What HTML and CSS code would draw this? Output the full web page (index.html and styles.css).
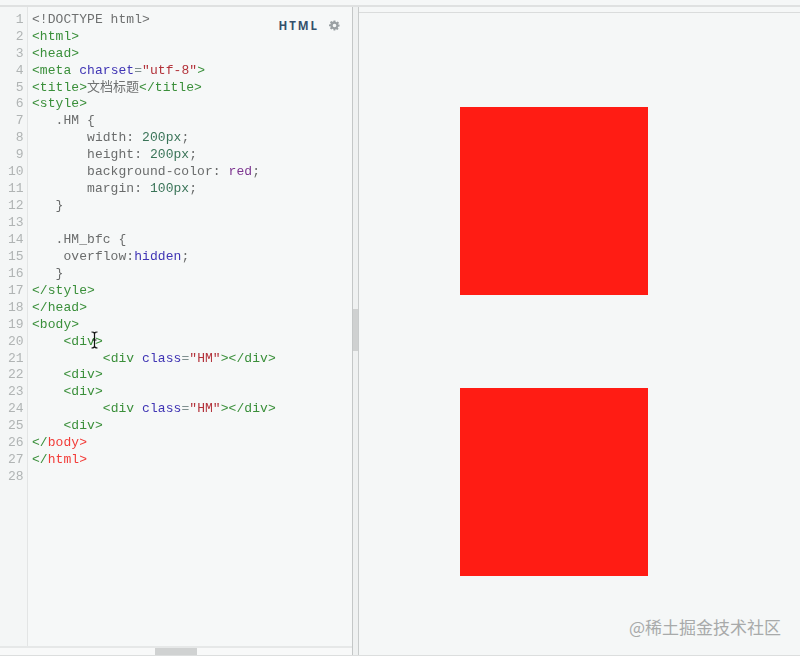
FILE: index.html
```html
<!DOCTYPE html>
<html lang="zh">
<head>
<meta charset="utf-8">
<title>HTML 预览</title>
<link rel="stylesheet" href="styles.css">
</head>
<body>
<div class="app">
  <section class="editor">
    <div class="editor-main">
      <div class="gutter">
        <div>1</div><div>2</div><div>3</div><div>4</div><div>5</div><div>6</div><div>7</div><div>8</div><div>9</div><div>10</div><div>11</div><div>12</div><div>13</div><div>14</div><div>15</div><div>16</div><div>17</div><div>18</div><div>19</div><div>20</div><div>21</div><div>22</div><div>23</div><div>24</div><div>25</div><div>26</div><div>27</div><div>28</div>
      </div>
      <pre class="code"><span class="meta">&lt;!DOCTYPE html&gt;</span>
<span class="tag">&lt;html&gt;</span>
<span class="tag">&lt;head&gt;</span>
<span class="tag">&lt;meta</span> <span class="attr">charset</span><span class="eq">=</span><span class="str">"utf-8"</span><span class="tag">&gt;</span>
<span class="tag">&lt;title&gt;</span><span class="cjk">文档标题</span><span class="tag">&lt;/title&gt;</span>
<span class="tag">&lt;style&gt;</span>
   .HM {
       width: <span class="num">200px</span>;
       height: <span class="num">200px</span>;
       background-color: <span class="kw">red</span>;
       margin: <span class="num">100px</span>;
   }

   .HM_bfc {
    overflow:<span class="attr">hidden</span>;
   }
<span class="tag">&lt;/style&gt;</span>
<span class="tag">&lt;/head&gt;</span>
<span class="tag">&lt;body&gt;</span>
    <span class="tag">&lt;div&gt;</span>
         <span class="tag">&lt;div</span> <span class="attr">class</span><span class="eq">=</span><span class="str">"HM"</span><span class="tag">&gt;&lt;/div&gt;</span>
    <span class="tag">&lt;div&gt;</span>
    <span class="tag">&lt;div&gt;</span>
         <span class="tag">&lt;div</span> <span class="attr">class</span><span class="eq">=</span><span class="str">"HM"</span><span class="tag">&gt;&lt;/div&gt;</span>
    <span class="tag">&lt;div&gt;</span>
<span class="tag">&lt;/</span><span class="err">body</span><span class="err">&gt;</span>
<span class="tag">&lt;/</span><span class="err">html</span><span class="err">&gt;</span>
</pre>
    </div>
    <div class="hscroll"><div class="hthumb"></div></div>
    <div class="lang">
      <span class="lang-name">HTML</span>
      <svg class="gear" viewBox="0 0 24 24" width="11" height="11" aria-hidden="true"><path fill="#9aa0a3" fill-rule="evenodd" d="M10 1h4l.6 3.100 1.900.8 2.600-1.800 2.800 2.800-1.800 2.600.8 1.900L23 10v4l-3.100.6-.8 1.900 1.800 2.600-2.800 2.800-2.600-1.800-1.900.8L13.900 23h-4l-.5-3.100-1.900-.8-2.600 1.800-2.800-2.800 1.800-2.600-.8-1.900L0 13.900v-4l3.100-.5.8-1.900L2.100 4.900l2.800-2.800 2.600 1.800 1.900-.8zM12 8a4 4 0 1 0 0 8 4 4 0 0 0 0-8z"/></svg>
    </div>
    <svg class="ibeam" viewBox="0 0 9 18" width="9" height="18" aria-hidden="true"><path fill="none" stroke="#111" stroke-width="1.2" d="M1.500 1c1.500 0 3 .4 3 2v12c0 1.600-1.500 2-3 2M7.500 1c-1.500 0-3 .4-3 2v12c0 1.600 1.500 2 3 2M2.500 9h4"/></svg>
  </section>
  <div class="splitter"><div class="grip"></div></div>
  <section class="preview">
    <div class="box"></div>
    <div class="box"></div>
    <div class="mark">@稀土掘金技术社区</div>
  </section>
</div>
</body>
</html>
```
FILE: styles.css
```css
html, body {
  margin: 0;
  height: 100%;
  background: #f5f7f7;
  overflow: hidden;
}
.app {
  display: flex;
  height: 648px;
  margin-top: 5px;
  border-top: 2px solid #dfe1e1;
  border-bottom: 1px solid #dcdede;
}
.editor {
  position: relative;
  width: 352px;
  display: flex;
  flex-direction: column;
  border-right: 1px solid #c4c7c7;
  background: #f6f8f8;
}
.editor-main {
  flex: 1;
  display: flex;
  min-height: 0;
}
.gutter {
  width: 27px;
  border-right: 1px solid #e3e5e5;
  padding-top: 4.800px;
  font: 13px/16.93px "Liberation Mono", monospace;
  color: #b0b4b4;
  text-align: right;
  background: #f4f6f6;
  filter: blur(0.3px);
}
.gutter div {
  padding-right: 3.500px;
}
.code {
  margin: 0;
  padding: 4.800px 0 0 4px;
  font: 13px/16.93px "Liberation Mono", "Noto Sans CJK SC", monospace;
  letter-spacing: 0.06px;
  color: #6a6c6c;
  filter: blur(0.3px);
}
.tag { color: #3a8f3a; }
.meta { color: #6e7070; }
.attr { color: #3f34b4; }
.eq { color: #7f8f8f; }
.str { color: #b3323a; }
.num { color: #3a7458; }
.kw { color: #7d3590; }
.err { color: #f23c38; }
.cjk { letter-spacing: 0; color: #707272; }
.hscroll {
  height: 7px;
  border-top: 2px solid #e6e8e8;
  background: #f8f9f9;
}
.hthumb {
  width: 42px;
  height: 7px;
  margin-left: 155px;
  background: #d0d2d2;
}
.lang {
  position: absolute;
  top: 12px;
  right: 12px;
  display: flex;
  align-items: center;
  gap: 10px;
}
.lang-name {
  font: 700 11.500px/13px "Open Sans", "Liberation Sans", sans-serif;
  letter-spacing: 1.900px;
  color: #34506b;
}
.gear { display: block; }
.ibeam {
  position: absolute;
  left: 90px;
  top: 324px;
}
.splitter {
  width: 5px;
  background: #eff1f1;
  border-right: 1px solid #c9cccc;
  display: flex;
  align-items: flex-start;
}
.grip {
  width: 5px;
  height: 42px;
  margin-top: 302px;
  background: #cfd1d1;
}
.preview {
  position: relative;
  flex: 1;
  margin-top: 5px;
  border-top: 1px solid #dadcdc;
  padding: 94px 0 0 101px;
  background: #f5f7f7;
}
.box {
  width: 188px;
  height: 188px;
  background: #ff1c14;
  margin-bottom: 93px;
}
.mark {
  position: absolute;
  right: 19px;
  bottom: 17px;
  font: 17px/22px "Noto Sans CJK SC", sans-serif;
  color: #a8aaaa;
}
```
